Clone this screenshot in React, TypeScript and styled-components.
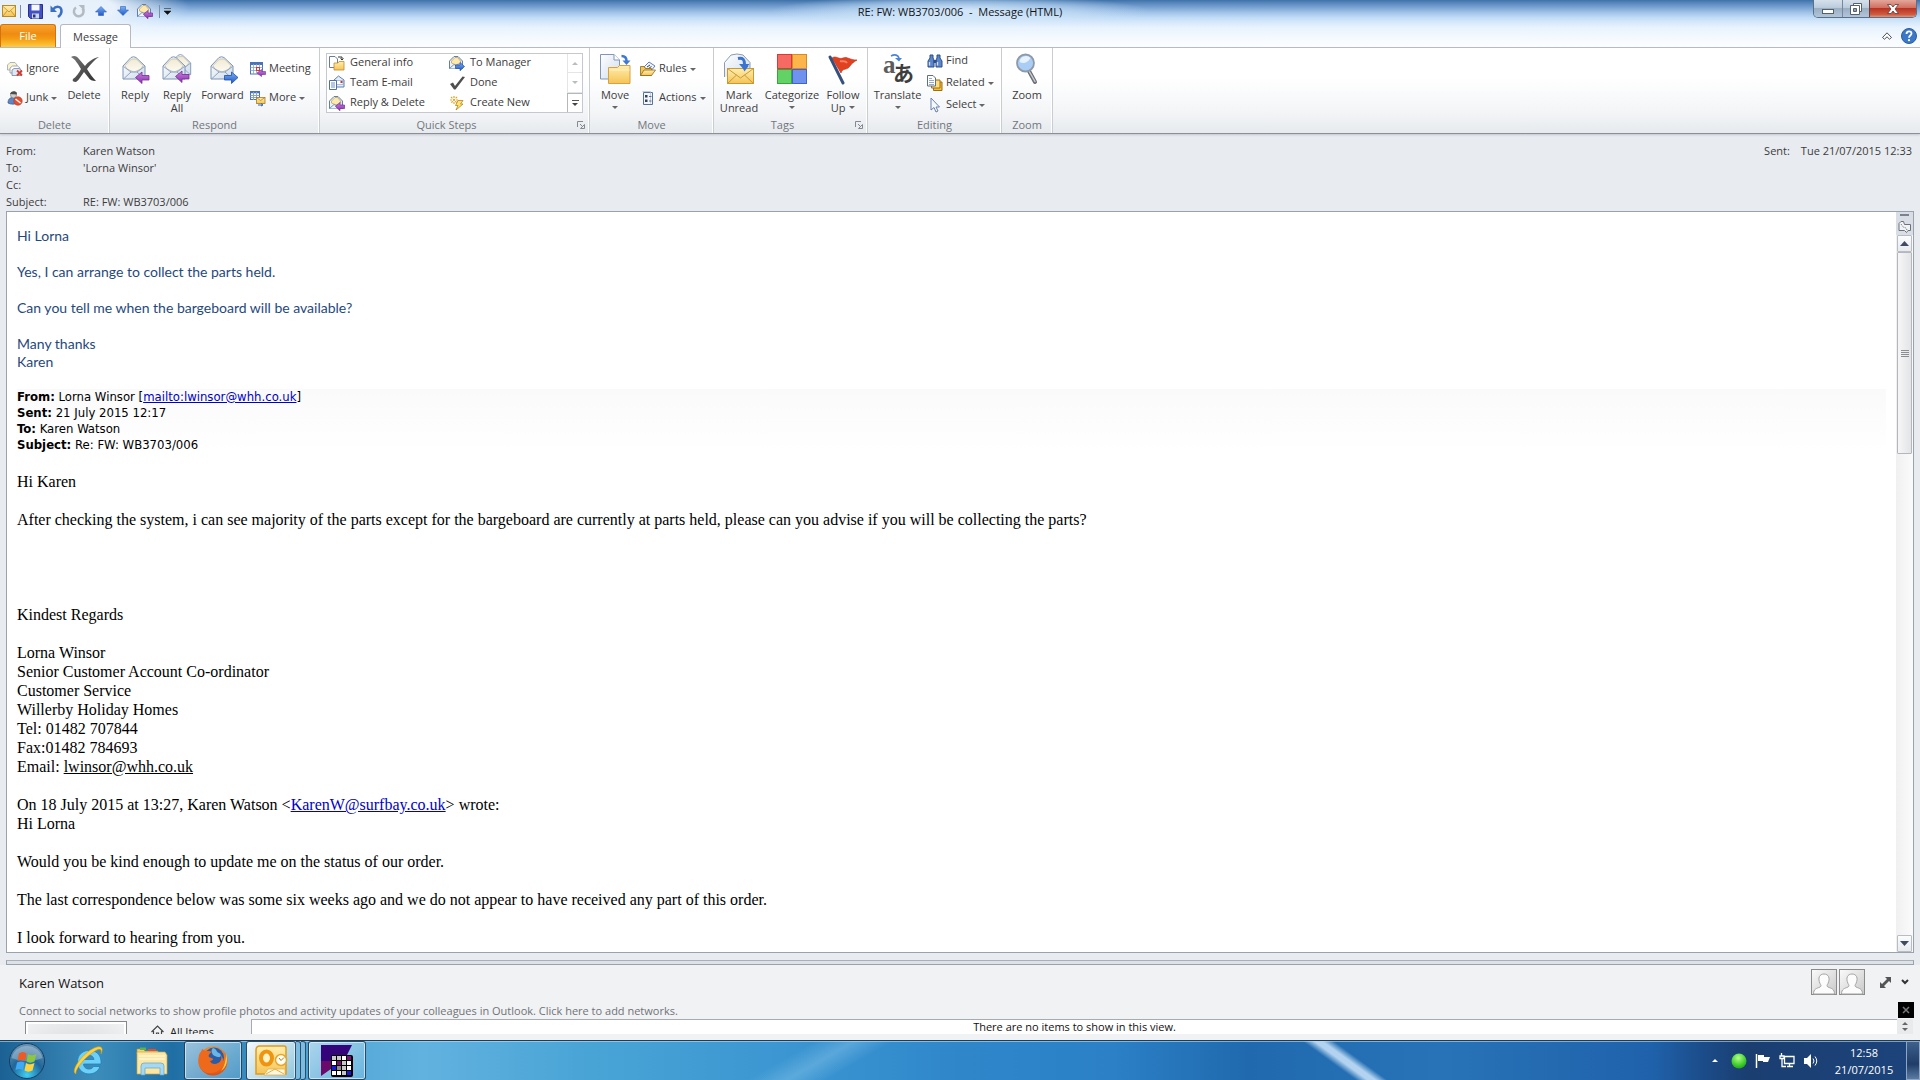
import React from "react";
import styled, { createGlobalStyle } from "styled-components";

const ui = `"Open Sans", "Noto Sans", sans-serif`;

const GlobalStyle = createGlobalStyle`
  *, *::before, *::after { box-sizing: border-box; }
  html, body { margin: 0; padding: 0; }
  body { background: #e8ebf0; font-family: ${ui}; font-size: 11px; color: #3c3c3c; }
  button { font: inherit; color: inherit; background: none; border: 0; padding: 0; margin: 0; cursor: default; }
  svg { display: block; flex: none; overflow: visible; }
`;

/* ---------- window frame ---------- */

const Window = styled.div`
  display: flex;
  flex-direction: column;
  height: 100vh;
  overflow: hidden;
`;

const Chrome = styled.div`
  flex: none;
  background:
    linear-gradient(to bottom, rgba(255, 255, 255, 0) 0, rgba(240, 247, 254, 0.5) 20px, rgba(250, 252, 255, 0.92) 40px, #fcfdff 47px),
    radial-gradient(ellipse 190px 16px at 50% 11px, rgba(214, 234, 252, 0.9), rgba(190, 220, 246, 0.55) 60%, rgba(180, 212, 244, 0)),
    radial-gradient(ellipse 190px 34px at 0 8px, #e6f0fa 60%, rgba(214, 230, 246, 0)),
    linear-gradient(to bottom, #3f72aa 0, #5f92ca 8px, #9cc8f1 18px, #cfe6fc 28px);
`;

const TitleBar = styled.header`
  display: grid;
  grid-template-columns: 1fr auto 1fr;
  align-items: start;
  height: 24px;
`;

const QuickAccess = styled.div`
  display: flex;
  align-items: center;
  height: 22px;
`;

const QatButton = styled.button<{ $w?: number }>`
  display: flex;
  justify-content: center;
  align-items: center;
  width: ${(p) => p.$w ?? 22}px;
  height: 22px;
`;

const QatRule = styled.span`
  width: 1px;
  height: 13px;
  margin: 0 3px;
  background: #7b8ea5;
`;

const Title = styled.h1`
  margin: 0;
  font-size: 11px;
  font-weight: 400;
  line-height: 23px;
  color: #10141a;
  white-space: pre;
`;

const Caption = styled.div`
  justify-self: end;
  display: flex;
  height: 18px;
  margin-right: 3px;
  border: 1px solid #5b6f87;
  border-top: 0;
  border-radius: 0 0 5px 5px;
  overflow: hidden;
`;

const CaptionButton = styled.button<{ $w: number; $close?: boolean }>`
  display: flex;
  align-items: center;
  justify-content: center;
  width: ${(p) => p.$w}px;
  border-left: 1px solid ${(p) => (p.$close ? "#6b3a3a" : "#74889f")};
  background: ${(p) =>
    p.$close
      ? "linear-gradient(#e2a79b, #d2705f 45%, #b93422 50%, #cf5a3f 85%, #e09577)"
      : "linear-gradient(#d5e0ec, #bccbdb 45%, #9aaec4 50%, #b3c5d8)"};
  &:first-child { border-left: 0; }
`;

const Tabs = styled.nav`
  display: flex;
  align-items: flex-end;
  height: 24px;
  border-bottom: 1px solid #b6bac0;
`;

const FileTab = styled.button`
  width: 56px;
  height: 23px;
  border: 1px solid #d4720e;
  border-bottom: 0;
  border-radius: 3px 3px 0 0;
  background: linear-gradient(#f6a431, #f08b12 40%, #f39a12 60%, #ffcb3c);
  color: #fff;
  line-height: 22px;
`;

const MessageTab = styled.button`
  width: 71px;
  height: 24px;
  margin: 0 auto -1px 4px;
  border: 1px solid #b6bac0;
  border-bottom: 0;
  border-radius: 3px 3px 0 0;
  background: #fff;
  line-height: 22px;
`;

const TabTools = styled.div`
  display: flex;
  align-items: center;
  gap: 9px;
  height: 23px;
  padding-right: 3px;
`;

/* ---------- ribbon ---------- */

const Ribbon = styled.div`
  flex: none;
  display: flex;
  height: 86px;
  border-bottom: 1px solid #8b9097;
  background: linear-gradient(#fff 35%, #f3f5f7 75%, #e7eaee);
  box-shadow: 0 1px 2px #c3c8cf;
`;

const Group = styled.section<{ $w: number }>`
  display: flex;
  flex-direction: column;
  width: ${(p) => p.$w}px;
  border-right: 1px solid #c9cdd3;
  box-shadow: inset -1px 0 #fff;
`;

const GroupBody = styled.div`
  flex: 1;
  display: flex;
`;

const GroupFooter = styled.div<{ $launch?: boolean }>`
  display: grid;
  grid-template-columns: 1fr ${(p) => (p.$launch ? "16px" : "")};
  align-items: center;
  justify-items: center;
  height: 17px;
  color: #71767d;
`;

const LargeButton = styled.button<{ $w: number }>`
  display: flex;
  flex-direction: column;
  align-items: center;
  width: ${(p) => p.$w}px;
  padding-top: 5px;
  line-height: 13px;
  white-space: nowrap;
`;

const LargeLabel = styled.span`
  display: flex;
  flex-direction: column;
  align-items: center;
  margin-top: 3px;
`;

const LabelLine = styled.span`
  display: flex;
  align-items: center;
  gap: 4px;
  height: 13px;
`;

const SmallStack = styled.div<{ $w: number; $pad: number; $tight?: boolean }>`
  display: flex;
  flex-direction: column;
  width: ${(p) => p.$w}px;
  gap: ${(p) => (p.$tight ? 0 : 7)}px;
  padding: ${(p) => (p.$tight ? 2 : 10)}px 0 0 ${(p) => p.$pad}px;
`;

const SmallButton = styled.button`
  display: flex;
  align-items: center;
  gap: 3px;
  height: 22px;
  white-space: nowrap;
`;

const SmallLabel = styled.span`
  line-height: 14px;
  padding-bottom: 2px;
`;

const Caret = styled.span<{ $up?: boolean; $color?: string }>`
  width: 0;
  height: 0;
  border: 3px solid transparent;
  border-${(p) => (p.$up ? "top" : "bottom")}-width: 0;
  border-${(p) => (p.$up ? "bottom" : "top")}-color: ${(p) => p.$color ?? "#666"};
`;

const Gallery = styled.div`
  display: flex;
  width: 257px;
  height: 60px;
  margin: 5px 0 0 6px;
  border: 1px solid #c5c9cf;
  background: #fff;
`;

const GalleryGrid = styled.div`
  flex: 1;
  display: grid;
  grid-template-columns: 120px 1fr;
  grid-template-rows: repeat(3, 20px);
  align-content: center;
  padding-left: 2px;
`;

const GalleryItem = styled.button`
  display: flex;
  align-items: center;
  gap: 5px;
  white-space: nowrap;
`;

const GalleryScroll = styled.div`
  display: grid;
  grid-template-rows: repeat(3, 1fr);
  width: 15px;
`;

const GalleryArrow = styled.button<{ $on?: boolean }>`
  display: flex;
  flex-direction: column;
  gap: 2px;
  align-items: center;
  justify-content: center;
  border: solid ${(p) => (p.$on ? "#b4b8be" : "#e3e5e8")};
  border-width: ${(p) => (p.$on ? "1px 0 0 1px" : "0 0 1px 1px")};
`;

const ArrowBar = styled.span`
  width: 7px;
  height: 1px;
  background: #555;
`;

/* ---------- message header ---------- */

const MessageHeader = styled.div`
  flex: none;
  display: flex;
  justify-content: space-between;
  padding: 8px 8px 1px 6px;
`;

const Fields = styled.dl`
  display: grid;
  grid-template-columns: 77px auto;
  grid-auto-rows: 17px;
  line-height: 17px;
  margin: 0;
  dt, dd { margin: 0; }
`;

const SentFields = styled(Fields)`
  grid-template-columns: auto auto;
  column-gap: 11px;
`;

/* ---------- message body ---------- */

const MessageFrame = styled.main`
  flex: 1;
  min-height: 0;
  display: flex;
  margin: 0 6px;
  border: 1px solid #9aa2ad;
  background: #fff;
`;

const MessageBody = styled.article`
  flex: 1;
  overflow: hidden;
  padding: 15px 10px 0;
  font-family: "Liberation Serif", serif;
  font-size: 16px;
  line-height: 19px;
  color: #000;
  p { margin: 0 0 19px; }
  a { color: #00c; }
`;

const Reply = styled.div`
  font-family: Lato, sans-serif;
  font-size: 14px;
  line-height: 18px;
  color: #1f497d;
  p { margin-bottom: 18px; }
`;

const Quoted = styled.div`
  font-family: "DejaVu Sans Condensed", "DejaVu Sans", sans-serif;
  font-size: 13px;
  line-height: 16px;
  margin-bottom: 19px;
  background: linear-gradient(#fafafa, #fff);
  b { font-weight: 700; }
`;

const Gap = styled.div`
  height: 57px;
`;

const DarkLink = styled.a`
  && { color: #000; }
`;

const ScrollRail = styled.div`
  flex: none;
  display: flex;
  flex-direction: column;
  align-items: center;
  width: 17px;
  background: linear-gradient(to right, #f0f0f1, #fbfbfb);
`;

const RailTop = styled.div`
  display: flex;
  flex-direction: column;
  align-items: center;
  gap: 5px;
  align-self: stretch;
  height: 23px;
  padding-top: 2px;
  background: #d9dee6;
`;

const RailTick = styled.span`
  width: 9px;
  height: 2px;
  background: #7b828d;
`;

const RailButton = styled.button`
  display: flex;
  align-items: center;
  justify-content: center;
  width: 15px;
  height: 17px;
  border: 1px solid #b8bdc5;
  border-radius: 1px;
  background: linear-gradient(#fcfcfd, #e8eaee);
`;

const Thumb = styled.button`
  display: flex;
  flex-direction: column;
  align-items: center;
  justify-content: center;
  gap: 1px;
  width: 15px;
  flex: 0 0 202px;
  margin-bottom: auto;
  border: 1px solid #b3b7bd;
  border-radius: 1px;
  background: linear-gradient(to right, #f6f6f7, #e3e4e6);
`;

const Grip = styled.span`
  width: 8px;
  height: 1px;
  background: #8a8d92;
`;

/* ---------- people pane ---------- */

const Splitter = styled.div`
  flex: none;
  height: 5px;
  margin: 7px 6px 0;
  border: 1px solid #9aa2ad;
  border-top-color: #a9b0ba;
  background: #dde1e8;
`;

const PeoplePane = styled.aside`
  flex: none;
  padding-bottom: 6px;
  background: #f1f2f4;
`;

const PeopleRow = styled.div`
  display: flex;
  align-items: center;
  height: 36px;
  padding: 0 5px 2px 19px;
`;

const PersonName = styled.h2`
  margin: 0 auto 0 0;
  padding-top: 2px;
  font-size: 13px;
  font-weight: 400;
  color: #111;
`;

const Avatar = styled.button`
  width: 26px;
  height: 26px;
  margin-right: 2px;
  border: 1px solid #8b8b8b;
  background: linear-gradient(135deg, #fafafa, #c9c9c9);
`;

const PaneTools = styled.div`
  display: flex;
  align-items: center;
  margin-left: 8px;
`;

const PaneTool = styled.button`
  display: flex;
  justify-content: center;
  width: 20px;
`;

const NoticeRow = styled.div`
  display: flex;
  align-items: center;
  justify-content: space-between;
  height: 18px;
  padding: 0 6px 0 19px;
`;

const Notice = styled.a`
  color: #6f7277;
  text-decoration: none;
`;

const CloseNotice = styled.button`
  display: flex;
  align-items: center;
  justify-content: center;
  width: 16px;
  height: 16px;
  background: #000;
`;

const ActivityRow = styled.div`
  display: flex;
  height: 15px;
  padding: 0 7px 0 25px;
  overflow: hidden;
`;

const PhotoFrame = styled.div`
  width: 102px;
  height: 90px;
  margin-top: 2px;
  border: 1px solid #85888c;
  box-shadow: inset 0 0 0 2px #fff;
  background: radial-gradient(ellipse at center, #d4d5d7, #f1f2f4);
`;

const FilterLink = styled.button`
  display: flex;
  align-items: flex-start;
  gap: 6px;
  width: 124px;
  padding: 6px 0 0 24px;
  line-height: 14px;
  color: #222;
  white-space: nowrap;
`;

const ActivityList = styled.div`
  flex: 1;
  height: 80px;
  border: 1px solid #a6abb2;
  border-right: 0;
  background: #fff;
  color: #111;
  line-height: 14px;
  text-align: center;
`;

const Spin = styled.div`
  display: flex;
  flex-direction: column;
  align-items: center;
  gap: 3px;
  width: 16px;
  padding-top: 3px;
  background: #e9eaec;
`;

/* ---------- taskbar ---------- */

const Taskbar = styled.footer`
  flex: none;
  display: flex;
  align-items: stretch;
  height: 40px;
  border-top: 1px solid #1d3c58;
  box-shadow: inset 0 1px rgba(190, 222, 245, 0.6);
  background:
    linear-gradient(36deg, rgba(255, 255, 255, 0) 68.7%, rgba(214, 236, 255, 0.8) 69.3%, rgba(214, 236, 255, 0.8) 69.7%, rgba(255, 255, 255, 0) 70.3%),
    linear-gradient(150deg, rgba(255, 255, 255, 0) 41%, rgba(170, 218, 245, 0.3) 43%, rgba(255, 255, 255, 0) 45%),
    linear-gradient(to right, #1b6194 0, #3d8dbb 5%, #1f6fa5 9%, #4ea3d2 16%, #62b2df 22%, #4aa5d6 30%, #3c97d2 40%, #2f87ca 50%, #2b80c6 58%, #2069ae 65%, #2873b8 75%, #1f62ab 86%, #1b4a86 89%, #1a3e70 91%, #1c447c 100%);
`;

const TaskButton = styled.button<{ $w: number; $open?: boolean; $active?: boolean }>`
  display: flex;
  align-items: center;
  justify-content: center;
  width: ${(p) => p.$w}px;
  margin: ${(p) => (p.$active ? "0 0 0 2px" : p.$open ? "0 2px" : "0")};
  border: ${(p) => (p.$open ? "1px solid rgba(20, 50, 80, 0.85)" : "0")};
  border-radius: 3px;
  box-shadow: ${(p) => (p.$open ? "inset 0 0 0 1px rgba(235, 247, 255, 0.65)" : "none")};
  background: ${(p) =>
    p.$active
      ? "linear-gradient(135deg, #f4f9fb, #b9dbe9 60%, #8ec5dc)"
      : p.$open
        ? "linear-gradient(135deg, rgba(235, 247, 255, 0.6), rgba(160, 210, 235, 0.25))"
        : "none"};
`;

const StackEdge = styled.span`
  width: 5px;
  border: 1px solid rgba(20, 50, 80, 0.8);
  border-left: 0;
  border-radius: 0 3px 3px 0;
  background: rgba(170, 215, 240, 0.5);
`;

const Tray = styled.div`
  display: flex;
  align-items: center;
  gap: 2px;
  margin-left: auto;
`;

const TrayButton = styled.button`
  display: flex;
  align-items: center;
  justify-content: center;
  width: 22px;
  height: 32px;
`;

const Clock = styled.time`
  width: 80px;
  line-height: 17px;
  color: #fff;
  text-align: center;
  white-space: pre-line;
`;

const ShowDesktop = styled.button`
  width: 14px;
  align-self: stretch;
  border: 1px solid #8ea6c2;
  background: linear-gradient(#3d608c, #1f3d68 60%, #5a7ba4);
`;

/* ---------- icons ---------- */

type ArrowKind = "left" | "right" | undefined;

const PaintStore = styled.svg`
  position: absolute;
  width: 0;
  height: 0;
`;

const Defs = () => (
  <PaintStore aria-hidden="true">
    <defs>
      <linearGradient id="paper" x1="0" y1="0" x2="1" y2="1">
        <stop offset="0" stopColor="#ffffff" />
        <stop offset="1" stopColor="#cfdcec" />
      </linearGradient>
      <linearGradient id="cream" x1="0" y1="0" x2="0" y2="1">
        <stop offset="0" stopColor="#f1ead2" />
        <stop offset="1" stopColor="#fdfbf2" />
      </linearGradient>
      <linearGradient id="gold" x1="0" y1="0" x2="0" y2="1">
        <stop offset="0" stopColor="#ffeeb0" />
        <stop offset="1" stopColor="#f5c455" />
      </linearGradient>
      <linearGradient id="purple" x1="0" y1="0" x2="0" y2="1">
        <stop offset="0" stopColor="#c884dd" />
        <stop offset="1" stopColor="#8a2cae" />
      </linearGradient>
      <linearGradient id="blue" x1="0" y1="0" x2="0" y2="1">
        <stop offset="0" stopColor="#7cb0f2" />
        <stop offset="1" stopColor="#2158c4" />
      </linearGradient>
      <linearGradient id="ink" x1="0" y1="0" x2="1" y2="1">
        <stop offset="0" stopColor="#777" />
        <stop offset="1" stopColor="#2c2c2c" />
      </linearGradient>
      <radialGradient id="orb" cx="0.5" cy="0.9" r="0.9">
        <stop offset="0" stopColor="#3fd0f5" />
        <stop offset="0.5" stopColor="#1f6699" />
        <stop offset="1" stopColor="#6f96b4" />
      </radialGradient>
      <radialGradient id="fox" cx="0.5" cy="0.3" r="0.8">
        <stop offset="0" stopColor="#ffb030" />
        <stop offset="1" stopColor="#d8400f" />
      </radialGradient>
      <radialGradient id="green" cx="0.45" cy="0.3" r="0.8">
        <stop offset="0" stopColor="#b4ff8a" />
        <stop offset="0.6" stopColor="#3fce2b" />
        <stop offset="1" stopColor="#238d18" />
      </radialGradient>
    </defs>
  </PaintStore>
);

const ArrowShape = ({ kind }: { kind: ArrowKind }) =>
  kind === "left" ? (
    <path d="M13.500 22.500 20 17v3.500h7v4.500h-7v3.500z" fill="url(#purple)" stroke="#7a2a99" strokeWidth="0.8" />
  ) : kind === "right" ? (
    <path d="M28 22.500 21.500 17v3.500h-7v4.500h7v3.500z" fill="url(#blue)" stroke="#1d4fae" strokeWidth="0.8" />
  ) : null;

const EnvelopeShape = () => (
  <g strokeLinejoin="round">
    <path d="M1 11 9 2.500q2.500-1.500 5 0L23 11v13H1z" fill="url(#paper)" stroke="#7d94b4" />
    <path d="M3 10.500 9.500 4h5L21 10.500 19 14l-7 3-7-3z" fill="url(#cream)" stroke="#b9b7a8" strokeWidth="0.7" />
    <path d="M1.500 11.500 9 17h6l7.500-5.500M1.500 24 9 17M22.500 24 15 17" fill="none" stroke="#8ea3c0" />
  </g>
);

const MailLarge = ({ kind, double }: { kind: ArrowKind; double?: boolean }) => (
  <svg width="32" height="32" viewBox="0 0 32 32">
    {double ? (
      <>
        <g transform="translate(9 0) scale(0.9)"><EnvelopeShape /></g>
        <g transform="translate(1 2)"><EnvelopeShape /></g>
        <g transform="translate(1 1)"><ArrowShape kind={kind} /></g>
      </>
    ) : (
      <g transform="translate(3 2)"><EnvelopeShape /><ArrowShape kind={kind} /></g>
    )}
  </svg>
);

const MailSmall = ({ kind }: { kind: ArrowKind }) => (
  <svg width="16" height="16" viewBox="0 0 16 16">
    <path d="M.5 6 5 1.500h4L13.500 6v7.500H.5z" fill="url(#paper)" stroke="#5f7fb0" />
    <path d="M2.500 6 6 2.500h2.500L11.500 6v2L7 10 2.500 8z" fill="#fbe9ae" stroke="#c49a45" strokeWidth="0.7" />
    <path d="M.5 13.500 5 9.500l2 1 2-1 4.500 4" fill="#eef4fb" stroke="#5f7fb0" strokeWidth="0.8" />
    {kind === "left" ? (
      <path d="M6.500 11.500 11 7.500V10h4.500v3.500H11v2.200z" fill="url(#purple)" stroke="#7a2a99" strokeWidth="0.7" />
    ) : (
      <path d="M15.500 11.500 11 7.500V10H6.500v3.500H11v2.200z" fill="url(#blue)" stroke="#1d4fae" strokeWidth="0.7" />
    )}
  </svg>
);

const YellowMail = () => (
  <svg width="14" height="12" viewBox="0 0 14 12">
    <rect x="0.500" y="0.500" width="13" height="11" fill="url(#gold)" stroke="#b88a24" />
    <path d="M.5 1 7 7l6.500-6M1 11l4-5M13 11 9 6" fill="none" stroke="#b88a24" strokeWidth="0.8" />
  </svg>
);

const SaveIcon = () => (
  <svg width="15" height="15" viewBox="0 0 15 15">
    <path d="M.5.5h14v14h-12l-2-2z" fill="#4351c2" stroke="#27318b" />
    <path d="M3.500.5h8v6h-8z" fill="#f6f8ff" />
    <path d="M4 9.500h7v5H4z" fill="#cdd4ee" />
    <path d="M5 10.500h2.500v3H5z" fill="#27318b" />
  </svg>
);

const UndoIcon = ({ redo }: { redo?: boolean }) => (
  <svg width="14" height="14" viewBox="0 0 14 14">
    {redo ? (
      <>
        <path d="M4 3.500A4.800 4.800 0 1 0 10.500 4.500" fill="none" stroke="#b4bac2" strokeWidth="2.500" />
        <path d="M6.500 1h6v6z" fill="#b4bac2" />
      </>
    ) : (
      <>
        <path d="M3 5.500C6 1.500 11.500 2 11.500 7c0 2.500-1.500 4.500-3.500 6" fill="none" stroke="#3c6fc4" strokeWidth="2.500" />
        <path d="M.5 1.500V8H7z" fill="#3c6fc4" />
      </>
    )}
  </svg>
);

const NavArrow = ({ down }: { down?: boolean }) => (
  <svg width="12" height="10" viewBox="0 0 12 10">
    <path
      d={down ? "M6 9.500.5 4h3V.5h5V4h3z" : "M6 .5.5 6h3v3.500h5V6h3z"}
      fill="url(#blue)"
      stroke="#2b62c2"
      strokeWidth="0.6"
    />
  </svg>
);

const IgnoreIcon = () => (
  <svg width="16" height="16" viewBox="0 0 16 16">
    <path d="M.5 4 3 1.500h5L10 4v5H.5z" fill="#fdf3c9" stroke="#9aa3ae" strokeWidth="0.8" />
    <path d="M3 7l2.500-2h5L13 7v5H3z" fill="#fff" stroke="#8496ae" strokeWidth="0.8" />
    <path d="M5 9l2-1.500h5L14 9v5.500H5z" fill="#dfe8f4" stroke="#7187a5" strokeWidth="0.8" />
    <path d="m10 9.500 5 5m0-5-5 5" stroke="#d9382b" strokeWidth="1.800" />
  </svg>
);

const JunkIcon = () => (
  <svg width="16" height="16" viewBox="0 0 16 16">
    <path d="M1 13c0-4 2-5.500 5-5.500s5 1.500 5 5.500c-2 1.500-8 1.500-10 0z" fill="#5f86c4" stroke="#34548c" strokeWidth="0.7" />
    <circle cx="6.500" cy="5" r="3" fill="#cfcfcf" stroke="#666" strokeWidth="0.6" />
    <path d="M3 4c.5-3 5.500-4 7-1l-.5 1.500z" fill="#4d4d4d" />
    <circle cx="11" cy="11" r="4.200" fill="#e2512f" stroke="#b5301a" strokeWidth="0.6" />
    <path d="m8.500 9 5 4" stroke="#fff" strokeWidth="1.500" />
  </svg>
);

const DeleteIcon = () => (
  <svg width="32" height="32" viewBox="0 0 32 32">
    <path
      d="M3 4c3-2 6-1 8 2l6 7C20 9 25 5 31 4c-4 2-8 7-12 12 3 5 6 9 9 12-4 0-6-1-8-4l-4-5c-3 4-5 8-8 10-3 0-4-1-3-3 3-2 6-6 8-10C10 11 7 6 3 4z"
      fill="url(#ink)"
    />
  </svg>
);

const MeetingIcon = ({ more }: { more?: boolean }) => (
  <svg width="16" height="16" viewBox="0 0 16 16">
    {more ? (
      <>
        <rect x="0.500" y="1.500" width="9" height="8" fill="#fff" stroke="#4a73b8" />
        <path d="M.5 2.500h9" stroke="#4a73b8" strokeWidth="1.500" />
        <path d="M.5 5.500h9M.5 7.500h9M3.500 2v8M6.500 2v8" stroke="#86a5d6" />
        <rect x="6.500" y="7.500" width="8.500" height="6" fill="url(#gold)" stroke="#a67c1d" strokeWidth="0.8" />
        <path d="m6.500 7.500 4 3 4.500-3" fill="none" stroke="#a67c1d" strokeWidth="0.7" />
        <path d="M8 15h4M11 13.500l2 1.500-2 1" fill="none" stroke="#2b62c2" />
      </>
    ) : (
      <>
        <rect x="0.500" y="1.500" width="12" height="11.500" fill="#fff" stroke="#4a73b8" />
        <path d="M.5 3h12" stroke="#4a73b8" strokeWidth="2" />
        <path d="M.5 6.500h12M.5 9.500h12M3.500 3v10M6.500 3v10M9.500 3v10" stroke="#86a5d6" strokeWidth="0.800" />
        <rect x="6.500" y="6.500" width="3" height="3" fill="#fff" stroke="#d9382b" />
        <path d="M7 12 11.500 8.500v2h4v3h-4v2z" fill="url(#purple)" stroke="#7a2a99" strokeWidth="0.6" />
      </>
    )}
  </svg>
);

const MoveSmallIcon = () => (
  <svg width="16" height="16" viewBox="0 0 16 16">
    <path d="M.5 1.500H6L8.500 4v8.500h-8z" fill="#fff" stroke="#6a7b95" />
    <path d="M9 2h4v3M11.500 3.500 13 5l1.500-1.500" fill="none" stroke="#333" />
    <path d="M5 8h4l1-1.500h5V15H5z" fill="url(#gold)" stroke="#c08a2a" strokeWidth="0.8" />
  </svg>
);

const TeamMailIcon = () => (
  <svg width="16" height="16" viewBox="0 0 16 16">
    <path d="M5 5 9.500 1 15 5v7H5z" fill="#e5edf8" stroke="#5b7fb5" />
    <path d="M7 5.500h7v4H7z" fill="#fff" stroke="#7f9bc4" strokeWidth="0.600" />
    <rect x="11.500" y="6" width="2" height="2" fill="#c33" />
    <path d="M.5 5.500h7v9h-7z" fill="#fff" stroke="#4f6fa0" />
    <path d="M2 8h4M2 10h4M2 12h4" stroke="#6b8fc7" />
  </svg>
);

const CheckIcon = () => (
  <svg width="16" height="16" viewBox="0 0 16 16">
    <path d="m1 9 3-1.500L6 11l7.500-9.500L16 2 6.500 14.500H5z" fill="#4f4f4f" />
  </svg>
);

const CreateIcon = () => (
  <svg width="16" height="16" viewBox="0 0 16 16">
    <path d="M5 1v8M1 5h8M2 2l6 6M8 2 2 8" stroke="#e2a624" strokeWidth="1.200" strokeDasharray="2 1" />
    <path d="M9 5.500h5L11.500 9H14l-7 6 2-4.500H6.500z" fill="#ffe27a" stroke="#b98516" strokeWidth="0.8" />
  </svg>
);

const MoveIcon = () => (
  <svg width="32" height="32" viewBox="0 0 32 32">
    <path d="M1.500 1.500H15L20.500 7v19h-19z" fill="url(#paper)" stroke="#8296b5" />
    <path d="M15 1.500V7h5.500" fill="#fff" stroke="#8296b5" />
    <path d="M22.500 3c4 0 5 2 5 5" fill="none" stroke="#3f78cf" strokeWidth="2.500" />
    <path d="M23.500 7.500h8L27.500 12z" fill="#3f78cf" />
    <path d="M9.500 14.500h9l2-2H31v18H9.500z" fill="url(#gold)" stroke="#d8a03f" />
    <path d="M10 17h20.500" stroke="#fff2c4" />
  </svg>
);

const RulesIcon = () => (
  <svg width="16" height="16" viewBox="0 0 16 16">
    <path d="m4 6 5-5 6 4-5 6z" fill="#eef4fc" stroke="#5f7fb0" />
    <path d="m7 6 3-2M8.500 7.500l3-2" stroke="#444" />
    <path d="M.5 5.500H4l1.500 2h6v7H.5z" fill="#f3c65a" stroke="#8f6a1a" strokeWidth="0.8" />
    <path d="M.5 14.500 4 9h11.500l-4 5.500z" fill="url(#gold)" stroke="#8f6a1a" strokeWidth="0.8" />
  </svg>
);

const ActionsIcon = () => (
  <svg width="16" height="16" viewBox="0 0 16 16">
    <path d="M3.500 2.500h9v12h-9z" fill="#f3f7fc" stroke="#5b7196" />
    <path d="M2.500 1.500h8v12" fill="none" stroke="#a9b9d2" strokeWidth="0.700" />
    <rect x="5" y="5" width="2.500" height="2.500" fill="#33425c" />
    <rect x="5" y="9.500" width="2.500" height="2.500" fill="#33425c" />
    <path d="M9 6.500h2.500M9 11h2.500" stroke="#5b7196" />
  </svg>
);

const UnreadIcon = () => (
  <svg width="32" height="32" viewBox="0 0 32 32">
    <path d="M1.500 24V9.500L8 2q6-2 12 0l7 7.500V18" fill="url(#paper)" stroke="#8b9bb2" />
    <path d="M15 5.500c5-1 6.500 1 6.500 6" fill="none" stroke="#3a74d0" strokeWidth="3" />
    <path d="M16 11h10.500L21.500 17z" fill="#3a74d0" />
    <rect x="4.500" y="15.500" width="26" height="15" fill="url(#gold)" stroke="#c99a34" />
    <path d="M4.500 15.500 17.500 25l13-9.500M4.500 30.500l9-8.500M30.500 30.500l-9-8.500" fill="none" stroke="#c99a34" />
    <path d="M18.500 13h7l-4 5.500z" fill="#3a74d0" />
  </svg>
);

const CategorizeIcon = () => (
  <svg width="32" height="32" viewBox="0 0 32 32">
    <rect x="1.500" y="1.500" width="14" height="14" fill="#f56a63" stroke="#d93a34" />
    <rect x="16.500" y="1.500" width="14" height="14" fill="#fbb54a" stroke="#dd8a1c" />
    <rect x="1.500" y="16.500" width="14" height="14" fill="#62d267" stroke="#34a63a" />
    <rect x="16.500" y="16.500" width="14" height="14" fill="#6f92ef" stroke="#3f62cb" />
  </svg>
);

const FlagIcon = () => (
  <svg width="32" height="32" viewBox="0 0 32 32">
    <path d="M5 5c4-3 7 2 11 0s6 2 14 2c-3 2-5 3-7 6-3 5-7 1-9 7z" fill="#e2401f" stroke="#b9290f" strokeWidth="0.6" />
    <path d="M13 8c3 1 5-1 7 2" fill="none" stroke="#f58062" strokeWidth="2" />
    <path d="M3 4 16 30" stroke="#33507e" strokeWidth="3" strokeLinecap="round" />
  </svg>
);

const TranslateIcon = () => (
  <svg width="32" height="32" viewBox="0 0 32 32">
    <text x="1" y="20" fontFamily="Liberation Serif" fontWeight="700" fontSize="25" fill="#5c5c5c">a</text>
    <text x="11" y="28" fontFamily="Noto Sans CJK JP" fontWeight="700" fontSize="21" fill="#3d3d3d">あ</text>
    <path d="M9 3c4-2 7-1 8 2" fill="none" stroke="#4a83d8" strokeWidth="1.800" />
    <path d="M13 5h7l-3 3.500z" fill="#4a83d8" />
  </svg>
);

const FindIcon = () => (
  <svg width="16" height="16" viewBox="0 0 16 16">
    <path d="M3 2h3v3l1 2v7H1V8l2-3zM10 2h3v3l2 3v6H9V7l1-2z" fill="#5c86c8" stroke="#2d4f8c" />
    <path d="M6.500 7h3v3h-3z" fill="#2d4f8c" />
    <path d="M2.500 9v3.500M10.500 9v3.500" stroke="#cfe0f8" strokeWidth="1.300" />
  </svg>
);

const RelatedIcon = () => (
  <svg width="16" height="16" viewBox="0 0 16 16">
    <path d="M6.500 7h8.500v8.500H6.500z" fill="#f6bd3b" stroke="#9c6f10" />
    <path d="M4.500 5h8.500v8H4.500z" fill="#ffdc80" stroke="#9c6f10" />
    <path d="M.5.5H6L8.500 3v8h-8z" fill="#fff" stroke="#5d6f90" />
    <path d="M2 3.500h3M2 5.500h5M2 7.500h5M2 9.500h5" stroke="#7b93bd" strokeWidth="0.800" />
  </svg>
);

const SelectIcon = () => (
  <svg width="16" height="16" viewBox="0 0 16 16">
    <path d="M4 1v12l3-2.500L9 15l2-1-2-4h3.500z" fill="#f4f8ff" stroke="#6a80a8" />
  </svg>
);

const ZoomIcon = () => (
  <svg width="32" height="32" viewBox="0 0 32 32">
    <path d="m18 18 6 11" stroke="#6b6f76" strokeWidth="4" strokeLinecap="round" />
    <path d="m18 18 6 10.500" stroke="#c8ccd2" strokeWidth="1.500" strokeLinecap="round" />
    <circle cx="14.500" cy="10" r="8.500" fill="#a9cdf4" stroke="#8f9aa8" strokeWidth="1.800" />
    <path d="M8.500 9a6.500 6.500 0 0 1 11-4c-3 5-7 6-11 4z" fill="#e6f2ff" />
  </svg>
);

const LaunchIcon = () => (
  <svg width="8" height="8" viewBox="0 0 8 8">
    <path d="M.5 6V.5H6M3 3l3 3M7.500 3.500v4h-4z" fill="none" stroke="#858a92" />
  </svg>
);

const StartOrb = () => (
  <svg width="38" height="38" viewBox="0 0 38 38">
    <circle cx="19" cy="19" r="17.500" fill="url(#orb)" stroke="#143e60" />
    <path d="M3.500 16a16 16 0 0 1 31 0c-9 4-22 4-31 0z" fill="#fff" opacity="0.28" />
    <path d="M11 11.500c3-2 5-2 7.500 0L17 19c-2.500-1.500-4.500-1.500-7.500 0z" fill="#ee5a24" />
    <path d="M20 12c3 2 5 1.500 8.500 0l-2 7.500c-3 1.500-5.500 1.500-8 0z" fill="#8dc63f" />
    <path d="M9 20.500c3-1.500 5-1.500 7.500 0L15 28c-2.500-1.500-4.500-1.500-7.500 0z" fill="#3fa9f5" />
    <path d="M18 21c3 2 5 1.500 8.500 0l-2 7.500c-3 1.500-5.500 1.500-8 0z" fill="#ffd23e" />
  </svg>
);

const ExplorerE = () => (
  <svg width="34" height="34" viewBox="0 0 34 34">
    <path
      d="M30 20H12.500c.5 6 8 6.500 10 2.500H29C25 34 6.500 32 6.500 18S26 2.500 29.500 14q.8 3 .5 6zM12.500 15.500H23c-.5-5.500-9.500-6-10.500 0z"
      fill="#6fd0f5"
      stroke="#1d82bf"
      strokeWidth="0.800"
      fillRule="evenodd"
    />
    <path d="M5 30C-2 27 14 6 26 3c6-1.500 6 3 4 7 1-5-1-6-6-3C14 13 4 25 5 30z" fill="#ffd23e" stroke="#cf9a16" strokeWidth="0.600" />
  </svg>
);

const FolderIcon = () => (
  <svg width="34" height="34" viewBox="0 0 34 34">
    <path d="M2 5h6l2 2h13v3H2z" fill="#f5d477" stroke="#b9943a" strokeWidth="0.700" />
    <path d="M5 3.500h6V6H5z" fill="#5fb04f" />
    <path d="M13 5h8v2h-8z" fill="#e0503a" />
    <path d="M2 8h28l2 3v19H2z" fill="#fbe7a2" stroke="#c9a64f" strokeWidth="0.700" />
    <path d="M4 12h26M4 15h26" stroke="#fff6d2" strokeWidth="1.500" />
    <path d="M6 31V22q0-3 3-3h17q3 0 3 3v9h-4v-7H10v7z" fill="#a6d8f2" stroke="#5fa3cc" strokeWidth="0.700" />
  </svg>
);

const FirefoxIcon = () => (
  <svg width="32" height="32" viewBox="0 0 32 32">
    <circle cx="16" cy="16" r="14.500" fill="url(#fox)" />
    <circle cx="17" cy="12.500" r="10" fill="#2a5da8" />
    <path d="M16 3c4 1 3 4 6 5s2 5-1 4-5-1-6-4 0-4 1-5z" fill="#69b5e6" />
    <path d="M2 10c1-3 3-4 3-6 2 1 3 2 5 2 2 0 4 0 5 1-2 1-4 3-3 5 1 1 4 1 4 2s-2 2-3 2c1 3 5 4 8 2 3-1 4-5 3-8 3 4 3 9 0 13-5 6-14 7-19 2C1 21 1 15 2 10z" fill="#ee6a1a" />
    <path d="M29 9c2 6 1 13-5 17 3-4 5-9 5-17z" fill="#ffcf3f" />
  </svg>
);

const OutlookIcon = () => (
  <svg width="34" height="34" viewBox="0 0 34 34">
    <path d="M6 2h24q2 0 2 2v26H2V6q0-4 4-4z" fill="url(#gold)" stroke="#e09b1c" strokeWidth="1.500" />
    <path d="M14 25h17v6H10z" fill="#fff8df" stroke="#e5ae47" strokeWidth="0.800" />
    <path d="m12 30 9-5 9 5" fill="none" stroke="#e5ae47" />
    <circle cx="27" cy="16" r="5.500" fill="#fffdf4" stroke="#e8a52c" strokeWidth="1.500" />
    <path d="m25 14 2 2.500 3-3" fill="none" stroke="#b57a12" />
    <ellipse cx="12.500" cy="14" rx="5.500" ry="6.500" fill="#fff3c4" stroke="#ee9411" strokeWidth="4" />
  </svg>
);

const cellColors = ["#c8c8c8", "#c8c8c8", "#ffffff", "#7b1377", "#ffffff", "#7b1377", "#c8c8c8", "#ffffff", "#1818d8", "#8e8e8e", "#c8c8c8", "#ffffff", "#ffffff", "#ffffff", "#c8c8c8", "#1818d8"];

const GridAppIcon = () => (
  <svg width="34" height="34" viewBox="0 0 34 34">
    <path d="M1 1h31l-8 16 2 8H1z" fill="#34057a" />
    <path d="M1 17h10v8L1 32z" fill="#6a0b6c" />
    <rect x="11" y="11" width="22" height="22" rx="2" fill="#000" />
    {cellColors.map((c, i) => (
      <rect key={i} x={12 + (i % 4) * 5} y={12 + Math.floor(i / 4) * 5} width="4" height="4" fill={c} />
    ))}
  </svg>
);

const PersonIcon = () => (
  <svg width="24" height="24" viewBox="0 0 24 24">
    <path d="M1.500 24c0-5 3-5.500 6.500-7 1.500-.8 1-2 0-3.500C5.500 8 7.500 4 12 4s6.500 4 4 9.500c-1 1.500-1.500 2.700 0 3.500 3.500 1.500 6.500 2 6.500 7z" fill="#fcfcfc" stroke="#a3a3a3" />
  </svg>
);

/* ---------- composed parts ---------- */

type LargeProps = { w: number; icon: React.ReactNode; lines: string[]; caret?: "below" | "inline" };

const Large = ({ w, icon, lines, caret }: LargeProps) => (
  <LargeButton $w={w}>
    {icon}
    <LargeLabel>
      {lines.map((line, i) => (
        <LabelLine key={line}>
          {line}
          {caret === "inline" && i === lines.length - 1 && <Caret />}
        </LabelLine>
      ))}
      {caret === "below" && <LabelLine><Caret /></LabelLine>}
    </LargeLabel>
  </LargeButton>
);

const Small = ({ icon, label, menu }: { icon: React.ReactNode; label: string; menu?: boolean }) => (
  <SmallButton>
    {icon}
    <SmallLabel>{label}</SmallLabel>
    {menu && <Caret />}
  </SmallButton>
);

const RibbonGroup = ({ w, name, launch, children }: { w: number; name: string; launch?: boolean; children: React.ReactNode }) => (
  <Group $w={w} aria-label={name}>
    <GroupBody>{children}</GroupBody>
    <GroupFooter $launch={launch}>
      {name}
      {launch && <button aria-label={`${name} options`}><LaunchIcon /></button>}
    </GroupFooter>
  </Group>
);

const quickSteps: [string, React.ReactNode][] = [
  ["General info", <MoveSmallIcon />],
  ["To Manager", <MailSmall kind="right" />],
  ["Team E-mail", <TeamMailIcon />],
  ["Done", <CheckIcon />],
  ["Reply & Delete", <MailSmall kind="left" />],
  ["Create New", <CreateIcon />],
];

export default function App() {
  return (
    <Window>
      <GlobalStyle />
      <Defs />
      <Chrome>
        <TitleBar>
          <QuickAccess>
            <QatButton $w={17} aria-label="Window menu"><YellowMail /></QatButton>
            <QatRule />
            <QatButton aria-label="Save"><SaveIcon /></QatButton>
            <QatButton aria-label="Undo"><UndoIcon /></QatButton>
            <QatButton aria-label="Redo"><UndoIcon redo /></QatButton>
            <QatButton aria-label="Previous item"><NavArrow /></QatButton>
            <QatButton aria-label="Next item"><NavArrow down /></QatButton>
            <QatButton aria-label="Reply"><MailSmall kind="left" /></QatButton>
            <QatRule />
            <QatButton $w={8} aria-label="Customize toolbar">
              <svg width="7" height="7" viewBox="0 0 7 7"><path d="M0 .5h7M0 3h7L3.500 6.500z" fill="#111" stroke="#111" strokeWidth="0.500" /></svg>
            </QatButton>
          </QuickAccess>
          <Title>{"RE: FW: WB3703/006  -  Message (HTML)"}</Title>
          <Caption>
            <CaptionButton $w={28} aria-label="Minimize">
              <svg width="12" height="12" viewBox="0 0 12 12"><rect x="0.500" y="6.500" width="11" height="4" fill="#fff" stroke="#55606e" /></svg>
            </CaptionButton>
            <CaptionButton $w={27} aria-label="Restore">
              <svg width="12" height="12" viewBox="0 0 12 12">
                <path d="M3.500.5h8v8h-8z" fill="#fff" stroke="#55606e" />
                <path d="M.5 2.500h9v9h-9z" fill="#fff" stroke="#55606e" />
                <path d="M3.500 5.500h3v3h-3z" fill="#8fa3b9" stroke="#55606e" />
              </svg>
            </CaptionButton>
            <CaptionButton $w={47} $close aria-label="Close">
              <svg width="12" height="10" viewBox="0 0 12 10">
                <path d="M.5.5h3.500L6 3 8 .5h3.500L8 5l3.500 4.500H8L6 7 4 9.500H.5L4 5z" fill="#fff" stroke="#5c3a3a" strokeWidth="0.800" />
              </svg>
            </CaptionButton>
          </Caption>
        </TitleBar>
        <Tabs>
          <FileTab>File</FileTab>
          <MessageTab>Message</MessageTab>
          <TabTools>
            <button aria-label="Minimize the ribbon">
              <svg width="10" height="8" viewBox="0 0 10 8"><path d="M.5 5.500 5 .8l4.500 4.700L7.500 7.200 5 4.800 2.500 7.200z" fill="#fff" stroke="#4a5058" /></svg>
            </button>
            <button aria-label="Help">
              <svg width="16" height="16" viewBox="0 0 16 16">
                <circle cx="8" cy="8" r="7.500" fill="#3c78c8" stroke="#2b5c9f" />
                <path d="M5.500 6c0-3.500 5-3.500 5-.5C10.500 7.500 8 7.500 8 9.800" fill="none" stroke="#fff" strokeWidth="1.800" />
                <circle cx="8" cy="12.200" r="1.100" fill="#fff" />
              </svg>
            </button>
          </TabTools>
        </Tabs>
      </Chrome>

      <Ribbon>
        <RibbonGroup w={110} name="Delete">
          <SmallStack $w={63} $pad={7}>
            <Small icon={<IgnoreIcon />} label="Ignore" />
            <Small icon={<JunkIcon />} label="Junk" menu />
          </SmallStack>
          <Large w={42} icon={<DeleteIcon />} lines={["Delete"]} />
        </RibbonGroup>
        <RibbonGroup w={210} name="Respond">
          <SmallStack $w={5} $pad={0} />
          <Large w={40} icon={<MailLarge kind="left" />} lines={["Reply"]} />
          <Large w={44} icon={<MailLarge kind="left" double />} lines={["Reply", "All"]} />
          <Large w={47} icon={<MailLarge kind="right" />} lines={["Forward"]} />
          <SmallStack $w={70} $pad={4}>
            <Small icon={<MeetingIcon />} label="Meeting" />
            <Small icon={<MeetingIcon more />} label="More" menu />
          </SmallStack>
        </RibbonGroup>
        <RibbonGroup w={270} name="Quick Steps" launch>
          <Gallery>
            <GalleryGrid>
              {quickSteps.map(([label, icon]) => (
                <GalleryItem key={label}>{icon}<SmallLabel>{label}</SmallLabel></GalleryItem>
              ))}
            </GalleryGrid>
            <GalleryScroll>
              <GalleryArrow aria-label="Previous row"><Caret $up $color="#b9bcc1" /></GalleryArrow>
              <GalleryArrow aria-label="Next row"><Caret $color="#b9bcc1" /></GalleryArrow>
              <GalleryArrow $on aria-label="More quick steps"><ArrowBar /><Caret $color="#444" /></GalleryArrow>
            </GalleryScroll>
          </Gallery>
        </RibbonGroup>
        <RibbonGroup w={124} name="Move">
          <Large w={50} icon={<MoveIcon />} lines={["Move"]} caret="below" />
          <SmallStack $w={72} $pad={0}>
            <Small icon={<RulesIcon />} label="Rules" menu />
            <Small icon={<ActionsIcon />} label="Actions" menu />
          </SmallStack>
        </RibbonGroup>
        <RibbonGroup w={154} name="Tags" launch>
          <Large w={50} icon={<UnreadIcon />} lines={["Mark", "Unread"]} />
          <Large w={56} icon={<CategorizeIcon />} lines={["Categorize"]} caret="below" />
          <Large w={46} icon={<FlagIcon />} lines={["Follow", "Up"]} caret="inline" />
        </RibbonGroup>
        <RibbonGroup w={134} name="Editing">
          <Large w={59} icon={<TranslateIcon />} lines={["Translate"]} caret="below" />
          <SmallStack $w={72} $pad={0} $tight>
            <Small icon={<FindIcon />} label="Find" />
            <Small icon={<RelatedIcon />} label="Related" menu />
            <Small icon={<SelectIcon />} label="Select" menu />
          </SmallStack>
        </RibbonGroup>
        <RibbonGroup w={51} name="Zoom">
          <Large w={50} icon={<ZoomIcon />} lines={["Zoom"]} />
        </RibbonGroup>
      </Ribbon>

      <MessageHeader>
        <Fields>
          <dt>From:</dt><dd>Karen Watson</dd>
          <dt>To:</dt><dd>'Lorna Winsor'</dd>
          <dt>Cc:</dt><dd />
          <dt>Subject:</dt><dd>RE: FW: WB3703/006</dd>
        </Fields>
        <SentFields>
          <dt>Sent:</dt><dd>Tue 21/07/2015 12:33</dd>
        </SentFields>
      </MessageHeader>

      <MessageFrame>
        <MessageBody>
          <Reply>
            <p>Hi Lorna</p>
            <p>Yes, I can arrange to collect the parts held.</p>
            <p>Can you tell me when the bargeboard will be available?</p>
            <p>Many thanks<br />Karen</p>
          </Reply>
          <Quoted>
            <b>From:</b> Lorna Winsor [<a href="mailto:lwinsor@whh.co.uk">mailto:lwinsor@whh.co.uk</a>]<br />
            <b>Sent:</b> 21 July 2015 12:17<br />
            <b>To:</b> Karen Watson<br />
            <b>Subject:</b> Re: FW: WB3703/006
          </Quoted>
          <p>Hi Karen</p>
          <p>After checking the system, i can see majority of the parts except for the bargeboard are currently at parts held, please can you advise if you will be collecting the parts?</p>
          <Gap />
          <p>Kindest Regards</p>
          <p>
            Lorna Winsor<br />
            Senior Customer Account Co-ordinator<br />
            Customer Service<br />
            Willerby Holiday Homes<br />
            Tel: 01482 707844<br />
            Fax:01482 784693<br />
            Email: <DarkLink href="mailto:lwinsor@whh.co.uk">lwinsor@whh.co.uk</DarkLink>
          </p>
          <p>
            On 18 July 2015 at 13:27, Karen Watson &lt;<a href="mailto:KarenW@surfbay.co.uk">KarenW@surfbay.co.uk</a>&gt; wrote:<br />
            Hi Lorna
          </p>
          <p>Would you be kind enough to update me on the status of our order.</p>
          <p>The last correspondence below was some six weeks ago and we do not appear to have received any part of this order.</p>
          <p>I look forward to hearing from you.</p>
        </MessageBody>
        <ScrollRail>
          <RailTop>
            <RailTick />
            <svg width="13" height="12" viewBox="0 0 13 12">
              <path d="M1 2.500 3 .5h2.500l1 3h6v6H10l-1.500 2-2-2H1z" fill="#f2f3f5" stroke="#6d727a" />
              <path d="M3 3l2 3 3 1 1 2" fill="none" stroke="#6d727a" strokeDasharray="1 1" />
            </svg>
          </RailTop>
          <RailButton aria-label="Scroll up">
            <svg width="9" height="5" viewBox="0 0 9 5"><path d="M0 5 4.500 0 9 5z" fill="#3f4a63" /></svg>
          </RailButton>
          <Thumb aria-label="Scroll position"><Grip /><Grip /><Grip /><Grip /></Thumb>
          <RailButton aria-label="Scroll down">
            <svg width="9" height="5" viewBox="0 0 9 5"><path d="M0 0h9L4.500 5z" fill="#3f4a63" /></svg>
          </RailButton>
        </ScrollRail>
      </MessageFrame>

      <Splitter />
      <PeoplePane>
        <PeopleRow>
          <PersonName>Karen Watson</PersonName>
          <Avatar aria-label="Karen Watson"><PersonIcon /></Avatar>
          <Avatar aria-label="Lorna Winsor"><PersonIcon /></Avatar>
          <PaneTools>
            <PaneTool aria-label="Expand">
              <svg width="11" height="11" viewBox="0 0 11 11"><path d="M5 0h6v6L9 4 4 9l2 2H0V5l2 2 5-5z" fill="#555" /></svg>
            </PaneTool>
            <PaneTool aria-label="Collapse">
              <svg width="8" height="6" viewBox="0 0 8 6"><path d="m1 1 3 3 3-3" fill="none" stroke="#333" strokeWidth="2" /></svg>
            </PaneTool>
          </PaneTools>
        </PeopleRow>
        <NoticeRow>
          <Notice href="#networks">
            Connect to social networks to show profile photos and activity updates of your colleagues in Outlook. Click here to add networks.
          </Notice>
          <CloseNotice aria-label="Dismiss">
            <svg width="8" height="8" viewBox="0 0 8 8"><path d="m1 1 6 6m0-6L1 7" stroke="#777" strokeWidth="1.500" /></svg>
          </CloseNotice>
        </NoticeRow>
        <ActivityRow>
          <PhotoFrame />
          <FilterLink>
            <svg width="13" height="12" viewBox="0 0 13 12"><path d="M.5 7 6.500 1l6 6M2.500 6v6h8V6M5.500 12V8h2v4" fill="none" stroke="#444" strokeWidth="1.200" /></svg>
            All Items
          </FilterLink>
          <ActivityList>There are no items to show in this view.</ActivityList>
          <Spin><Caret $up /><Caret /></Spin>
        </ActivityRow>
      </PeoplePane>

      <Taskbar>
        <TaskButton $w={54} aria-label="Start"><StartOrb /></TaskButton>
        <TaskButton $w={68} aria-label="Internet Explorer"><ExplorerE /></TaskButton>
        <TaskButton $w={60} aria-label="File Explorer"><FolderIcon /></TaskButton>
        <TaskButton $w={58} $open aria-label="Firefox"><FirefoxIcon /></TaskButton>
        <TaskButton $w={50} $open $active aria-label="Outlook"><OutlookIcon /></TaskButton>
        <StackEdge />
        <StackEdge />
        <TaskButton $w={58} $open aria-label="Grid application"><GridAppIcon /></TaskButton>
        <Tray>
          <TrayButton aria-label="Show hidden icons"><Caret $up $color="#fff" /></TrayButton>
          <TrayButton aria-label="Status">
            <svg width="16" height="16" viewBox="0 0 16 16"><circle cx="8" cy="8" r="7.500" fill="url(#green)" /></svg>
          </TrayButton>
          <TrayButton aria-label="Action Center">
            <svg width="16" height="16" viewBox="0 0 16 16"><path d="M1.500 1v14" stroke="#fff" strokeWidth="1.500" /><path d="M3 2h6v2h6l-2 5H8V8H3z" fill="#fff" /></svg>
          </TrayButton>
          <TrayButton aria-label="Network">
            <svg width="16" height="16" viewBox="0 0 16 16"><path d="M5.500 3.500h9.500v7H5.500zM8 13.500h6M10.500 11v2.500M2.500 0v3M1 3h4v2.500H1zM3 6v7.500h4" fill="none" stroke="#fff" strokeWidth="1.300" /></svg>
          </TrayButton>
          <TrayButton aria-label="Volume">
            <svg width="16" height="16" viewBox="0 0 16 16"><path d="M1 5h3l4-4v14l-4-4H1z" fill="#fff" /><path d="M10 5.500q2 2.500 0 5M12 3.500q3.500 4.500 0 9" fill="none" stroke="#fff" /></svg>
          </TrayButton>
          <Clock>{"12:58\n21/07/2015"}</Clock>
          <ShowDesktop aria-label="Show desktop" />
        </Tray>
      </Taskbar>
    </Window>
  );
}
